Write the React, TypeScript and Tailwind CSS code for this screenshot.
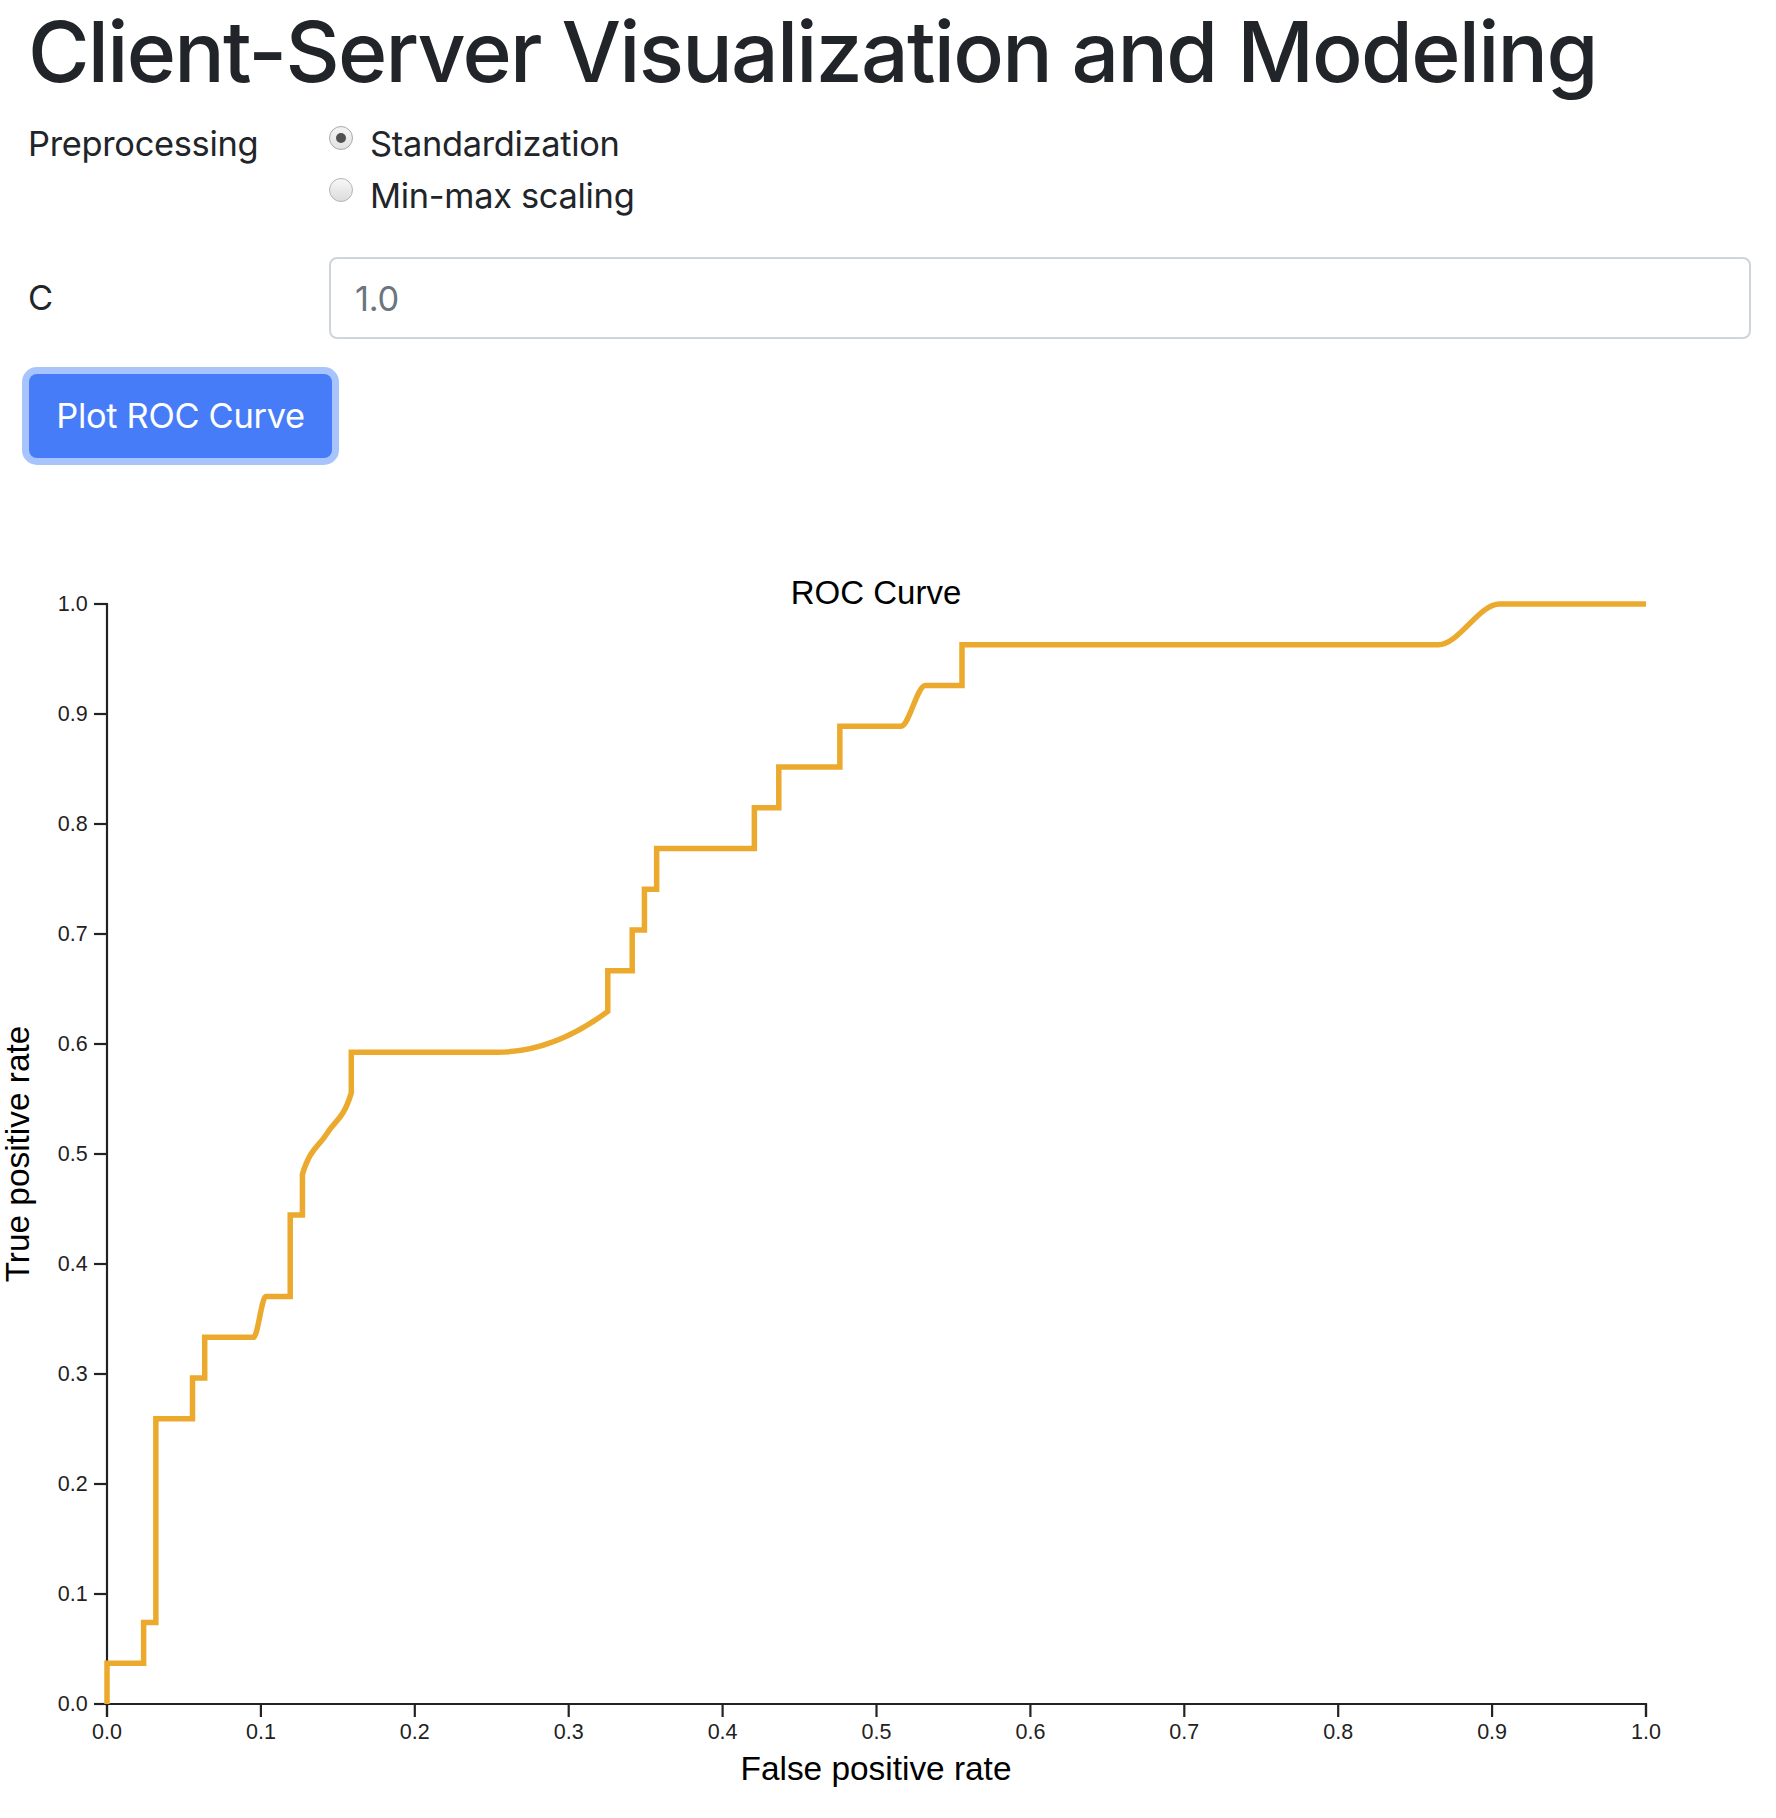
import React from "react"

// roc points as [fp count, tp count]; 126 negatives, 27 positives
const ROC: [number, number][] = [
  [0, 0], [0, 1], [3, 1], [3, 2], [4, 2], [4, 7], [7, 7], [7, 8], [8, 8], [8, 9],
  [12, 9], [13, 10], [15, 10], [15, 12], [16, 12], [16, 13], [18, 14], [20, 15], [20, 16],
  [32, 16], [41, 17], [41, 18], [43, 18], [43, 19], [44, 19], [44, 20], [45, 20], [45, 21],
  [53, 21], [53, 22], [55, 22], [55, 23], [60, 23], [60, 24], [65, 24], [67, 25], [70, 25],
  [70, 26], [109, 26], [114, 27], [126, 27],
]

const X0 = 107
const XW = 1539
const YT = 112
const YB = 1212

const sx = (v: number) => X0 + v * XW
const sy = (v: number) => YB - v * (YB - YT)

// same maths as d3.curveMonotoneX
function monotonePath(pts: [number, number][]) {
  let d = ""
  let x0 = NaN, y0 = NaN, x1 = NaN, y1 = NaN, t0 = NaN
  let state = 0
  const sign = (v: number) => (v < 0 ? -1 : 1)
  const seg = (ta: number, tb: number) => {
    const dx = (x1 - x0) / 3
    d += `C${x0 + dx},${y0 + dx * ta},${x1 - dx},${y1 - dx * tb},${x1},${y1}`
  }
  const slope3 = (x2: number, y2: number) => {
    const h0 = x1 - x0
    const h1 = x2 - x1
    const s0 = (y1 - y0) / h0
    const s1 = (y2 - y1) / h1
    const p = (s0 * h1 + s1 * h0) / (h0 + h1)
    return (sign(s0) + sign(s1)) * Math.min(Math.abs(s0), Math.abs(s1), 0.5 * Math.abs(p)) || 0
  }
  const slope2 = (t: number) => {
    const h = x1 - x0
    return h ? (3 * (y1 - y0) / h - t) / 2 : t
  }
  for (const [x, y] of pts) {
    let t1 = NaN
    if (x === x1 && y === y1) continue
    if (state === 0) {
      state = 1
      d += `M${x},${y}`
    } else if (state === 1) {
      state = 2
    } else if (state === 2) {
      state = 3
      t1 = slope3(x, y)
      seg(slope2(t1), t1)
    } else {
      t1 = slope3(x, y)
      seg(t0, t1)
    }
    x0 = x1; x1 = x
    y0 = y1; y1 = y
    t0 = t1
  }
  if (state === 2) d += `L${x1},${y1}`
  else if (state === 3) seg(t0, slope2(t0))
  return d
}

const ticks = [0, 0.1, 0.2, 0.3, 0.4, 0.5, 0.6, 0.7, 0.8, 0.9, 1.0]

function RocChart() {
  const line = monotonePath(ROC.map(([f, t]) => [sx(f / 126), sy(t / 27)]))
  return (
    <svg width={1776} height={1326} className="block" style={{ fontFamily: '"Liberation Sans", Arial, sans-serif' }}>
      <text x={876} y={111.5} textAnchor="middle" fontSize={33} fill="#000">ROC Curve</text>

      <g stroke="#222" strokeWidth={2.2} fill="none">
        <path d={`M${X0},${YB + 13}V${YB}H${X0 + XW}V${YB + 13}`} />
        {ticks.map((t) => (
          <line key={"xt" + t} x1={sx(t)} x2={sx(t)} y1={YB} y2={YB + 13} />
        ))}
        <path d={`M${X0 - 13},${YT}H${X0}V${YB}H${X0 - 13}`} />
        {ticks.map((t) => (
          <line key={"yt" + t} x1={X0 - 13} x2={X0} y1={sy(t)} y2={sy(t)} />
        ))}
      </g>
      <g fontSize={21.5} fill="#222">
        {ticks.map((t) => (
          <text key={"xl" + t} x={sx(t)} y={YB + 19.4} dy="0.71em" textAnchor="middle">{t.toFixed(1)}</text>
        ))}
        {ticks.map((t) => (
          <text key={"yl" + t} x={X0 - 19.4} y={sy(t)} dy="0.32em" textAnchor="end">{t.toFixed(1)}</text>
        ))}
      </g>

      <text x={876} y={1288} textAnchor="middle" fontSize={33.4} fill="#000">False positive rate</text>
      <text x={0} y={0} transform="translate(29,662) rotate(-90)" textAnchor="middle" fontSize={33.4} fill="#000">True positive rate</text>

      <path d={line} fill="none" stroke="#ebaa2d" strokeWidth={5.5} />
    </svg>
  )
}

function Radio({ checked, label }: { checked?: boolean; label: string }) {
  return (
    <div className="flex items-start h-[51.6px]">
      {checked ? (
        <div className="mt-[8px] w-6 h-6 rounded-full border border-[#a9a9a9] bg-gradient-to-b from-[#f4f4f4] to-[#e2e2e2] flex items-center justify-center shrink-0">
          <div className="w-[10px] h-[10px] rounded-full bg-[#505050]" />
        </div>
      ) : (
        <div className="mt-[8px] w-6 h-6 rounded-full border border-[#b4b4b4] bg-gradient-to-b from-[#f7f7f7] to-[#dcdcdc] shrink-0" />
      )}
      <span className="ml-[17px]">{label}</span>
    </div>
  )
}

export default function App() {
  return (
    <div className="bg-white min-h-[1818px] text-[#212529]" style={{ fontFamily: 'Inter, "Liberation Sans", sans-serif' }}>
      <div className="pl-[28px] pr-[25px] text-[34.4px] leading-[51.6px] tracking-[-0.3px]">
        <h1 className="text-[84px] leading-[103px] font-medium mb-[15px] tracking-[-1.75px]">
          Client-Server Visualization and Modeling
        </h1>

        <div className="grid grid-cols-[301px_1fr] mb-[36px]">
          <div>Preprocessing</div>
          <div>
            <Radio checked label="Standardization" />
            <Radio label="Min-max scaling" />
          </div>
        </div>

        <div className="grid grid-cols-[301px_1fr] items-center mb-[35px]">
          <div>C</div>
          <input
            type="text"
            placeholder="1.0"
            className="h-[82px] w-full border-2 border-[#ced4da] rounded-[8px] px-[24px] placeholder:text-[#6c757d] outline-none"
          />
        </div>

        <button className="ml-[1px] h-[84px] w-[303px] rounded-[8px] bg-[#477cf9] text-white shadow-[0_0_0_7px_#a8c4fc]">
          Plot ROC Curve
        </button>
      </div>

      <div className="mt-[34px]">
        <RocChart />
      </div>
    </div>
  )
}
